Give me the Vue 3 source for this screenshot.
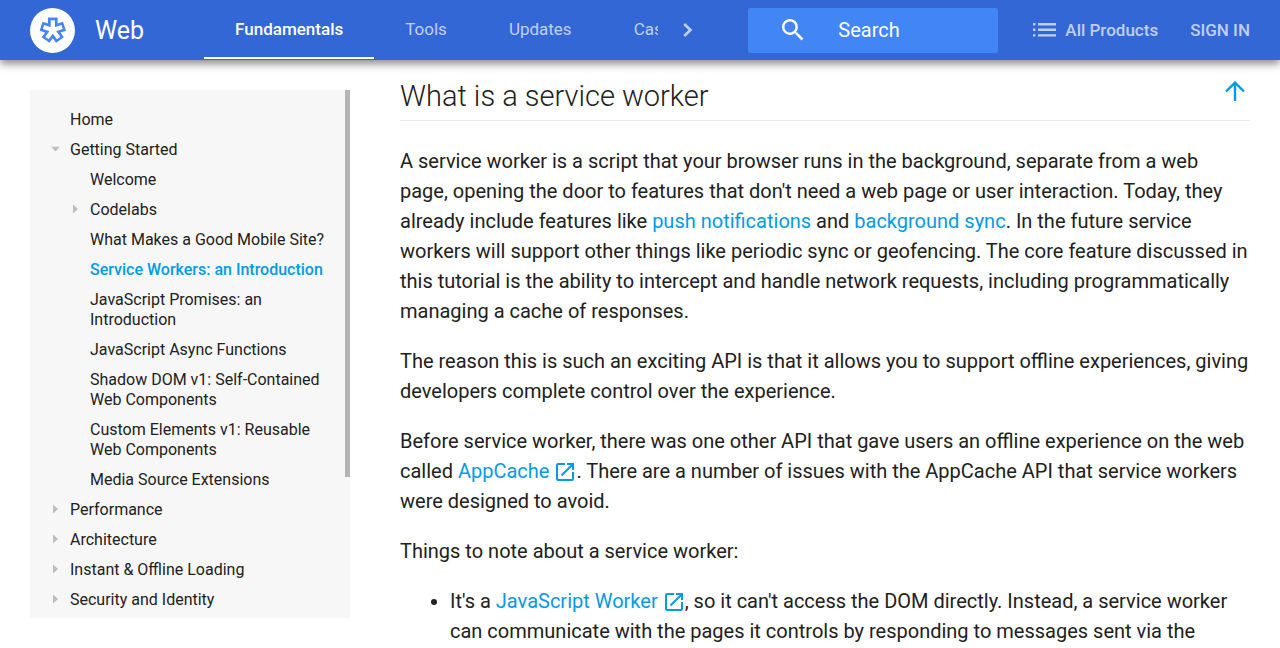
<script setup>
import { ref } from 'vue'

const query = ref('')
const tabs = ['Fundamentals', 'Tools', 'Updates', 'Case Studies']
const nav = [
  { label: 'Home' },
  {
    label: 'Getting Started',
    arrow: 'down',
    children: [
      { label: 'Welcome' },
      { label: 'Codelabs', arrow: 'right' },
      { label: 'What Makes a Good Mobile Site?' },
      { label: 'Service Workers: an Introduction', active: true },
      { label: 'JavaScript Promises: an Introduction' },
      { label: 'JavaScript Async Functions' },
      { label: 'Shadow DOM v1: Self-Contained Web Components' },
      { label: 'Custom Elements v1: Reusable Web Components' },
      { label: 'Media Source Extensions' },
    ],
  },
  { label: 'Performance', arrow: 'right' },
  { label: 'Architecture', arrow: 'right' },
  { label: 'Instant & Offline Loading', arrow: 'right' },
  { label: 'Security and Identity', arrow: 'right' },
]
</script>

<template>
  <div class="page">
    <header class="topbar">
      <a class="brand" href="#">
        <svg class="logo" viewBox="0 0 45 45" aria-hidden="true">
          <circle cx="22.5" cy="22.5" r="22.5" fill="#fff" />
          <path
            d="M22.8 22.1V9.6M22.8 22.1L34.5 18.3M22.8 22.1L30 32M22.8 22.1L15.6 32M22.8 22.1L11.1 18.3"
            fill="none"
            stroke="#4285f4"
            stroke-width="9.6"
          />
          <path
            d="M22.8 22.1V12.2M22.8 22.1L32.1 19.1M22.8 22.1L28.6 30.1M22.8 22.1L17 30.1M22.8 22.1L13.5 19.1"
            fill="none"
            stroke="#fff"
            stroke-width="4.2"
          />
        </svg>
        <span>Web</span>
      </a>
      <nav class="tabs" aria-label="Sections">
        <a v-for="(tab, i) in tabs" :key="tab" href="#" :class="['tab', { current: i === 0 }]">{{ tab }}</a>
      </nav>
      <button class="more" type="button" aria-label="More sections">
        <svg viewBox="0 0 10 16" width="10" height="16"><path d="M1.2 2L7.5 8L1.2 14" fill="none" stroke="currentColor" stroke-width="2.6" /></svg>
      </button>
      <label class="search">
        <svg viewBox="3 3 18 18" width="22" height="22" aria-hidden="true">
          <path
            fill="#fff"
            d="M15.5 14h-.79l-.28-.27A6.47 6.47 0 0 0 16 9.5 6.5 6.5 0 1 0 9.5 16c1.61 0 3.09-.59 4.23-1.57l.27.28v.79l5 4.99L20.49 19l-4.99-5zm-6 0C7.01 14 5 11.99 5 9.5S7.01 5 9.5 5 14 7.01 14 9.5 11.99 14 9.5 14z"
          />
        </svg>
        <input v-model="query" type="text" placeholder="Search" aria-label="Search" />
      </label>
      <a class="action products" href="#">
        <svg viewBox="0 0 23 14" width="23" height="14" aria-hidden="true">
          <path fill="currentColor" d="M0 0h2.4v2.4H0zM0 5.6h2.4V8H0zM0 11.2h2.4v2.4H0zM5 0h18v2.4H5zM5 5.6h18V8H5zM5 11.2h18v2.4H5z" />
        </svg>
        All Products
      </a>
      <a class="action" href="#">SIGN IN</a>
    </header>

    <div class="body">
      <aside class="sidebar">
        <nav class="side-scroll" aria-label="Contents">
          <ul class="side-list">
            <li v-for="item in nav" :key="item.label">
              <a href="#" class="entry">
                <svg v-if="item.arrow" class="arrow" :class="item.arrow" viewBox="0 0 5 10"><path d="M0 0.5L5 5L0 9.5Z" fill="currentColor" /></svg>
                <span class="text">{{ item.label }}</span>
              </a>
              <ul v-if="item.children" class="side-list nested">
                <li v-for="child in item.children" :key="child.label">
                  <a href="#" :class="['entry', { active: child.active }]">
                    <svg v-if="child.arrow" class="arrow" :class="child.arrow" viewBox="0 0 5 10"><path d="M0 0.5L5 5L0 9.5Z" fill="currentColor" /></svg>
                    <span class="text">{{ child.label }}</span>
                  </a>
                </li>
              </ul>
            </li>
          </ul>
        </nav>
        <div class="thumb"></div>
      </aside>

      <main class="article">
        <div class="heading">
          <h2>What is a service worker</h2>
          <a class="to-top" href="#" aria-label="Back to top">
            <svg viewBox="0 0 20 20" width="20" height="20"><path d="M10 20V2M1 10.5L10 1.6L19 10.5" fill="none" stroke="currentColor" stroke-width="2.4" /></svg>
          </a>
        </div>
        <p>
          A service worker is a script that your browser runs in the background, separate from a web page, opening the
          door to features that don't need a web page or user interaction. Today, they already include features like
          <a href="#">push notifications</a> and <a href="#">background sync</a>. In the future service workers will
          support other things like periodic sync or geofencing. The core feature discussed in this tutorial is the
          ability to intercept and handle network requests, including programmatically managing a cache of responses.
        </p>
        <p>
          The reason this is such an exciting API is that it allows you to support offline experiences, giving
          developers complete control over the experience.
        </p>
        <p>
          Before service worker, there was one other API that gave users an offline experience on the web called
          <a href="#">AppCache<svg class="ext" viewBox="3 3 18 18"><path fill="currentColor" d="M19 19H5V5h7V3H5a2 2 0 0 0-2 2v14a2 2 0 0 0 2 2h14a2 2 0 0 0 2-2v-7h-2v7zM14 3v2h3.59l-9.83 9.83 1.41 1.41L19 6.41V10h2V3h-7z" /></svg></a>. There
          are a number of issues with the AppCache API that service workers were designed to avoid.
        </p>
        <p>Things to note about a service worker:</p>
        <ul class="notes">
          <li>
            It's a
            <a href="#">JavaScript Worker<svg class="ext" viewBox="3 3 18 18"><path fill="currentColor" d="M19 19H5V5h7V3H5a2 2 0 0 0-2 2v14a2 2 0 0 0 2 2h14a2 2 0 0 0 2-2v-7h-2v7zM14 3v2h3.59l-9.83 9.83 1.41 1.41L19 6.41V10h2V3h-7z" /></svg></a>, so
            it can't access the DOM directly. Instead, a service worker can communicate with the pages it controls by
            responding to messages sent via the
          </li>
        </ul>
      </main>
    </div>
  </div>
</template>

<style>
body {
  margin: 0;
  background: #fff;
}
</style>

<style scoped>
.page {
  display: flex;
  flex-direction: column;
  height: 100vh;
  overflow: hidden;
  font-family: Roboto, "Liberation Sans", sans-serif;
  color: #212121;
}
a {
  color: #039be5;
  text-decoration: none;
}
.topbar {
  display: flex;
  align-items: center;
  flex: none;
  height: 60px;
  padding: 0 30px;
  background: #3367d6;
  box-shadow: 0 4px 8px rgba(0, 0, 0, 0.45);
  z-index: 1;
}
.brand {
  display: flex;
  align-items: center;
  gap: 20px;
  margin-right: 60px;
  color: #fff;
  font-size: 25px;
}
.logo {
  width: 45px;
  height: 45px;
}
.tabs {
  display: flex;
  align-self: stretch;
  flex: 1;
  min-width: 0;
  overflow: hidden;
}
.tab {
  flex: none;
  box-sizing: border-box;
  height: 59px;
  padding: 0 31px;
  border-bottom: 2px solid transparent;
  color: rgba(255, 255, 255, 0.7);
  font-size: 17px;
  line-height: 59px;
}
.tab.current {
  border-color: #fff;
  color: #fff;
  font-weight: 500;
}
.more {
  display: flex;
  align-items: center;
  justify-content: center;
  width: 60px;
  height: 60px;
  margin-right: 30px;
  padding: 0;
  border: 0;
  background: none;
  color: rgba(255, 255, 255, 0.7);
}
.search {
  display: flex;
  align-items: center;
  gap: 34px;
  box-sizing: border-box;
  width: 250px;
  height: 45px;
  padding: 0 34px;
  border-radius: 2px;
  background: #4285f4;
}
.search svg {
  flex: none;
}
.search input {
  width: 100%;
  min-width: 0;
  padding: 0;
  border: 0;
  outline: 0;
  background: none;
  color: #fff;
  font: inherit;
  font-size: 20px;
}
.search input::placeholder {
  color: #fff;
  opacity: 1;
}
.action {
  margin-left: 32px;
  color: rgba(255, 255, 255, 0.7);
  font-size: 17px;
  font-weight: 500;
  white-space: nowrap;
}
.products {
  display: flex;
  align-items: center;
  gap: 9px;
  margin-left: 35px;
}
.body {
  display: flex;
  flex: 1;
  gap: 50px;
  min-height: 0;
  padding: 0 30px;
}
.sidebar {
  position: relative;
  flex: none;
  width: 320px;
  margin: 30px 0;
  background: #f7f7f7;
}
.side-scroll {
  box-sizing: border-box;
  height: 100%;
  padding: 20px 20px 0;
  overflow: hidden;
}
.thumb {
  position: absolute;
  top: 0;
  right: 0;
  width: 5px;
  height: 73.3%;
  background: #b5b5b5;
}
.side-list {
  display: flex;
  flex-direction: column;
  gap: 10px;
  margin: 0;
  padding: 0;
  list-style: none;
}
.nested {
  margin-top: 10px;
  padding-left: 20px;
}
.entry {
  display: grid;
  grid-template-columns: 10px 1fr;
  column-gap: 10px;
  color: #212121;
  font-size: 16px;
  line-height: 20px;
}
.text {
  grid-column: 2;
}
.entry.active {
  color: #039be5;
  font-weight: 500;
}
.arrow {
  grid-column: 1;
  grid-row: 1;
  width: 5px;
  height: 10px;
  margin-top: 4px;
  justify-self: center;
  color: #bdbdbd;
}
.arrow.down {
  transform: rotate(90deg);
}
.article {
  flex: 1;
  min-width: 0;
  font-size: 20px;
  line-height: 30px;
}
.heading {
  display: flex;
  align-items: center;
  justify-content: space-between;
  margin-bottom: 25px;
  padding: 16px 5px 4px 0;
  border-bottom: 1px solid #ebebeb;
}
h2 {
  margin: 0;
  font-size: 29px;
  font-weight: 300;
  line-height: 40px;
}
.to-top {
  display: flex;
  align-self: flex-start;
  padding-top: 5px;
}
p {
  margin: 0 0 20px;
}
.ext {
  width: 18px;
  height: 18px;
  margin: 0 2px 0 7px;
  vertical-align: -3px;
}
.notes {
  margin: 0;
  padding-left: 50px;
}
</style>
